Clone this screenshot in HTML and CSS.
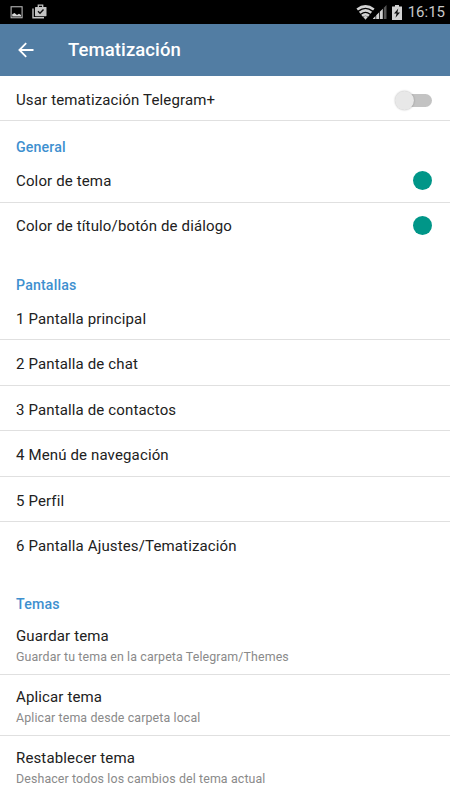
FILE: index.html
```html
<!DOCTYPE html>
<html lang="es">
<head>
    <meta charset="UTF-8">
    <meta name="viewport" content="width=device-width, initial-scale=1.0">
    <title>Tematización</title>
    <link rel="stylesheet" href="styles.css">
</head>
<body>
    <div class="status-bar">
        <svg class="icon-picture" width="13" height="13" viewBox="0 0 13 13">
            <rect x="1.1" y="0.75" width="11" height="11" fill="none" stroke="#b5b5b5" stroke-width="1.1"/>
            <path d="M2.2 10.5V8.2L4.5 7L7 9L9 7.8L11 9V10.5Z" fill="#d8d8d8"/>
        </svg>
        <svg class="icon-bag" width="15" height="15" viewBox="0 0 15 15">
            <path d="M1 4.5V13.8H12" fill="none" stroke="#c4c4c4" stroke-width="1.4"/>
            <path d="M6.3 3.5V1.2H10.7V3.5" fill="none" stroke="#c4c4c4" stroke-width="1.3"/>
            <rect x="3" y="3" width="11.5" height="9.2" rx="0.6" fill="#c4c4c4"/>
            <path d="M6 7.3L8 9.3L11.5 5.5" fill="none" stroke="#111" stroke-width="1.4"/>
        </svg>
        <div class="status-right">
            <svg width="19" height="15" viewBox="0 0 19 15">
                <g fill="none" stroke="#d2d2d2" stroke-width="2.5">
                    <path d="M1.2 4.6Q9.5 -1.8 17.8 4.6"/>
                    <path d="M3.7 7.8Q9.5 3 15.3 7.8"/>
                    <path d="M6 10.8Q9.5 8 13 10.8"/>
                </g>
                <path d="M7 11.8L9.5 14.7L12 11.8Q9.5 10.4 7 11.8Z" fill="#d2d2d2"/>
            </svg>
            <svg class="icon-signal" width="14" height="14" viewBox="0 0 14 14">
                <path d="M13.5 0V14H10.8V2.8Z" fill="#555"/>
                <path d="M0 14V13.5L2.5 11V14ZM3.2 14V10.3L6 7.5V14ZM6.8 14V6.7L9.8 3.7V14Z" fill="#d2d2d2"/>
            </svg>
            <svg class="icon-battery" width="10" height="15" viewBox="0 0 10 15">
                <path d="M3 0H7V1.5H10V15H0V1.5H3Z" fill="#d2d2d2"/>
                <path d="M6.3 3.5L2 8.6H4.6L3.5 12.7L8 7.4H5.4Z" fill="#111"/>
            </svg>
            <span class="clock">16:15</span>
        </div>
    </div>

    <header class="app-bar">
        <svg width="16" height="16" viewBox="0 0 16 16">
            <path d="M15.5 8H1.8M8.2 1.2L1.4 8L8.2 14.8" fill="none" stroke="#fff" stroke-width="1.8"/>
        </svg>
        <h1>Tematización</h1>
    </header>

    <div class="row row-switch">
        <span class="label">Usar tematización Telegram+</span>
        <span class="switch"><span class="thumb"></span></span>
    </div>

    <section>
        <h2>General</h2>
        <div class="row"><span class="label">Color de tema</span><span class="dot"></span></div>
        <div class="row"><span class="label">Color de título/botón de diálogo</span><span class="dot"></span></div>
    </section>

    <section class="screens">
        <h2>Pantallas</h2>
        <div class="row"><span class="label">1 Pantalla principal</span></div>
        <div class="row"><span class="label">2 Pantalla de chat</span></div>
        <div class="row"><span class="label">3 Pantalla de contactos</span></div>
        <div class="row"><span class="label">4 Menú de navegación</span></div>
        <div class="row"><span class="label">5 Perfil</span></div>
        <div class="row"><span class="label">6 Pantalla Ajustes/Tematización</span></div>
    </section>

    <section>
        <h2>Temas</h2>
        <div class="row row-detail">
            <span class="label">Guardar tema</span>
            <span class="detail">Guardar tu tema en la carpeta Telegram/Themes</span>
        </div>
        <div class="row row-detail">
            <span class="label">Aplicar tema</span>
            <span class="detail">Aplicar tema desde carpeta local</span>
        </div>
        <div class="row row-detail">
            <span class="label">Restablecer tema</span>
            <span class="detail">Deshacer todos los cambios del tema actual</span>
        </div>
    </section>
</body>
</html>
```

FILE: styles.css
```css
* {
    box-sizing: border-box;
}
body {
    margin: 0;
    height: 800px;
    overflow: hidden;
    background: #fff;
    color: #212121;
    font-family: Roboto, sans-serif;
}
.status-bar {
    display: flex;
    align-items: center;
    height: 24px;
    padding: 0 5px 0 10px;
    background: #000;
}
.icon-bag {
    margin-left: 9px;
    margin-top: -2px;
}
.status-right {
    display: flex;
    align-items: center;
    margin-left: auto;
}
.icon-signal {
    margin-left: -2px;
}
.icon-battery {
    margin-left: 5px;
}
.clock {
    margin-left: 6px;
    color: #c8c8c8;
    font-size: 15px;
    line-height: 24px;
}
.app-bar {
    display: flex;
    align-items: center;
    height: 52px;
    padding-left: 18px;
    background: #527da3;
}
h1 {
    margin: 0 0 0 34px;
    color: #fff;
    font-size: 18.5px;
    font-weight: 500;
    letter-spacing: 0.1px;
}
h2 {
    margin: 0;
    height: 36.5px;
    padding: 16px 16px 0;
    color: #3e90cf;
    font-size: 14.2px;
    font-weight: 500;
    letter-spacing: 0.15px;
    line-height: 20px;
}
section + section h2 {
    height: 46px;
    padding-top: 26px;
}
.row {
    display: flex;
    align-items: center;
    justify-content: space-between;
    height: 45.5px;
    padding: 2px 18px 0 16px;
    border-bottom: 1px solid #e0e0e0;
}
.row:last-child {
    border-bottom-color: transparent;
}
.row-switch {
    height: 45px;
    padding-top: 4px;
}
.screens .row {
    padding-top: 4px;
}
.label {
    font-size: 15px;
    letter-spacing: 0.14px;
    line-height: 20px;
}
.dot {
    width: 19px;
    height: 19px;
    margin-bottom: 1px;
    border-radius: 50%;
    background: #009688;
}
.switch {
    display: flex;
    align-items: center;
    width: 34px;
    height: 13px;
    border-radius: 7px;
    background: linear-gradient(to right, transparent 12px, #c3c3c3 12px);
}
.thumb {
    flex: none;
    width: 19px;
    height: 19px;
    margin-left: -3px;
    border-radius: 50%;
    background: #e8e8e8;
    box-shadow: 0 0 2px rgba(0, 0, 0, 0.3);
}
.row-detail {
    flex-direction: column;
    align-items: flex-start;
    justify-content: flex-start;
    height: 61.3px;
    padding-top: 12px;
}
.detail {
    margin-top: 2px;
    color: #8a8a8a;
    font-size: 12.4px;
    letter-spacing: 0.12px;
    line-height: 18px;
}
```
